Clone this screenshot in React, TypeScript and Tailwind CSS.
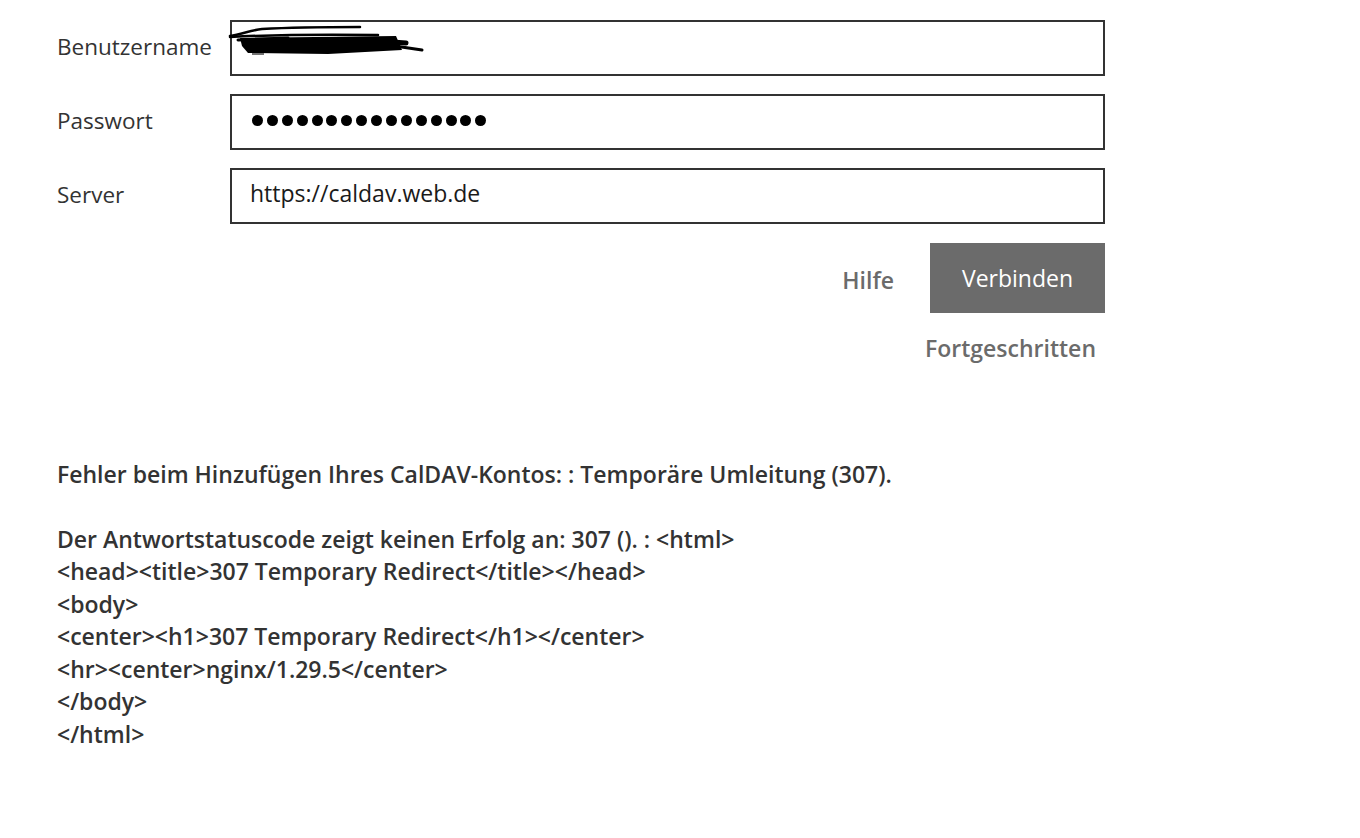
import React from 'react';

const font = { fontFamily: '"Open Sans", "Noto Sans", sans-serif' };

const errorLines = [
  'Fehler beim Hinzufügen Ihres CalDAV-Kontos: : Temporäre Umleitung (307).',
  '',
  'Der Antwortstatuscode zeigt keinen Erfolg an: 307 (). : <html>',
  '<head><title>307 Temporary Redirect</title></head>',
  '<body>',
  '<center><h1>307 Temporary Redirect</h1></center>',
  '<hr><center>nginx/1.29.5</center>',
  '</body>',
  '</html>',
];

// scribble that hides the user name
const Redaction = () => (
  <svg className="absolute left-[-4px] top-[2px]" width="200" height="34" viewBox="0 0 200 34">
    <path d="M2 12 C14 10 24 6 34 5 C70 3 100 3 132 3" stroke="#000" strokeWidth="2.5" fill="none" strokeLinecap="round" />
    <path d="M2 13 C40 11 80 10 150 11" stroke="#000" strokeWidth="2.5" fill="none" strokeLinecap="round" />
    <path d="M12 14 L168 12 L174 26 L100 30 L20 29 L14 22 Z" fill="#000" />
    <path d="M10 16 L60 14" stroke="#000" strokeWidth="3" fill="none" strokeLinecap="round" />
    <path d="M160 21 L194 26" stroke="#000" strokeWidth="3" fill="none" strokeLinecap="round" />
    <path d="M150 17 L178 19" stroke="#000" strokeWidth="5" fill="none" strokeLinecap="round" />
    <path d="M24 30 L36 30" stroke="#444" strokeWidth="1.5" fill="none" />
  </svg>
);

const Field: React.FC<{ label: string; children: React.ReactNode }> = ({ label, children }) => (
  <div className="flex items-center">
    <div className="w-[173px] pb-[3px] text-[22.5px] text-[#333]">{label}</div>
    <div className="relative flex h-[56px] w-[875px] items-center border-2 border-[#333] bg-white pl-[18px] text-[23px] text-[#1a1a1a]">
      {children}
    </div>
  </div>
);

export default function App() {
  return (
    <div className="min-h-screen w-full bg-white pl-[57px] pt-[20px]" style={font}>
      <div className="flex w-[1048px] flex-col gap-[18px]">
        <Field label="Benutzername">
          <Redaction />
        </Field>
        <Field label="Passwort">
          <div className="-mt-[4px] flex gap-[3.9px] pl-[2px]">
            {Array.from({ length: 16 }).map((_, i) => (
              <span key={i} className="h-[11px] w-[11px] rounded-full bg-black" />
            ))}
          </div>
        </Field>
        <Field label="Server">
          <span className="-mt-[5px]">https://caldav.web.de</span>
        </Field>
      </div>

      <div className="mt-[19px] flex w-[1048px] items-center justify-end gap-[36px]">
        <span className="pt-[5px] text-[23px] font-semibold text-[#6b6b6b]">Hilfe</span>
        <button className="h-[70px] w-[175px] bg-[#6b6b6b] text-[23px] text-white">Verbinden</button>
      </div>
      <div className="flex w-[1048px] justify-end pr-[9px] pt-[18px]">
        <span className="text-[23px] font-semibold text-[#6b6b6b]">Fortgeschritten</span>
      </div>

      <div className="mt-[92px] text-[23px] font-semibold leading-[32.5px] text-[#333]">
        {errorLines.map((line, i) => (
          <div key={i} className="h-[32.5px] whitespace-pre">
            {line}
          </div>
        ))}
      </div>
    </div>
  );
}
